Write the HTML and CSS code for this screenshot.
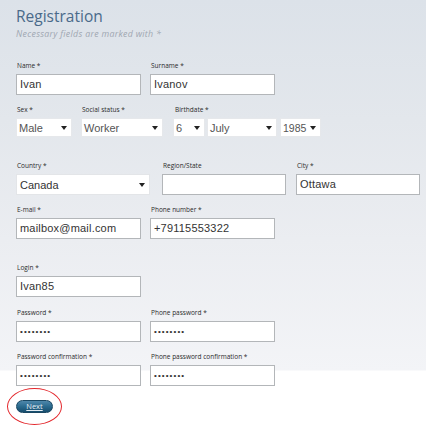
FILE: index.html
```html
<!DOCTYPE html>
<html>
<head>
<meta charset="utf-8">
<link rel="stylesheet" href="styles.css">
</head>
<body>
<div class="page">
  <div class="head">
    <h1 class="title">Registration</h1>
    <p class="subtitle">Necessary fields are marked with *</p>
  </div>

  <div class="row r1">
    <div class="field"><span class="label">Name *</span><div class="input w125">Ivan</div></div>
    <div class="field"><span class="label">Surname *</span><div class="input w125">Ivanov</div></div>
  </div>

  <div class="row r2">
    <div class="field"><span class="label">Sex *</span><div class="select w56"><span>Male</span><i class="arrow"></i></div></div>
    <div class="field"><span class="label">Social status *</span><div class="select w82"><span>Worker</span><i class="arrow"></i></div></div>
    <div class="field">
      <span class="label indent">Birthdate *</span>
      <div class="date">
        <div class="select w32"><span>6</span><i class="arrow"></i></div>
        <div class="select w70"><span>July</span><i class="arrow"></i></div>
        <div class="select w41"><span>1985</span><i class="arrow"></i></div>
      </div>
    </div>
  </div>

  <div class="row r3">
    <div class="field"><span class="label">Country *</span><div class="select wide w134"><span>Canada</span><i class="arrow"></i></div></div>
    <div class="field"><span class="label">Region/State</span><div class="input w124"></div></div>
    <div class="field"><span class="label">City *</span><div class="input w124">Ottawa</div></div>
  </div>

  <div class="row r4">
    <div class="field"><span class="label">E-mail *</span><div class="input w125">mailbox@mail.com</div></div>
    <div class="field"><span class="label">Phone number *</span><div class="input w125">+79115553322</div></div>
  </div>

  <div class="row r5">
    <div class="field"><span class="label">Login *</span><div class="input w125">Ivan85</div></div>
  </div>

  <div class="row r6">
    <div class="field"><span class="label">Password *</span><div class="input pw w125">••••••••</div></div>
    <div class="field"><span class="label">Phone password *</span><div class="input pw w125">••••••••</div></div>
  </div>

  <div class="row r7">
    <div class="field"><span class="label">Password confirmation *</span><div class="input pw w125">••••••••</div></div>
    <div class="field"><span class="label">Phone password confirmation *</span><div class="input pw w125">••••••••</div></div>
  </div>

  <div class="actions">
    <div class="mark"><button class="next">Next</button></div>
  </div>
</div>
</body>
</html>
```

FILE: styles.css
```css
html { background: #ffffff; }
body {
  margin: 0;
  min-height: 429px;
  background: linear-gradient(to bottom, #dce2e9 0px, #e3e7ec 120px, #ebedf1 240px, #f3f4f7 370px, #ffffff 371px, #ffffff 100%);
  font-family: "Liberation Sans", Arial, sans-serif;
  color: #222;
}
.page {
  padding: 6px 0 0 16px;
}
.head { height: 56px; }
.title {
  margin: 0;
  font-family: "Open Sans", sans-serif;
  font-weight: 400;
  font-size: 15.5px;
  line-height: 20px;
  color: #4a6a8a;
}
.subtitle {
  margin: 2px 0 0 0;
  font-family: "Open Sans", sans-serif;
  font-style: italic;
  font-size: 8.8px;
  line-height: 12px;
  letter-spacing: 0.3px;
  color: #9ea7b1;
}
.row { display: flex; }
.r1 { gap: 9px; }
.r2 { gap: 9px; margin-top: 11px; }
.r2 .field + .field + .field { margin-left: 1px; }
.r3 { gap: 12px; margin-top: 25px; }
.r3 .field:last-child { margin-left: -2px; }
.r4 { gap: 9px; margin-top: 11px; }
.r5 { margin-top: 25px; }
.r6 { gap: 9px; margin-top: 12px; }
.r7 { gap: 9px; margin-top: 11px; }
.field { display: flex; flex-direction: column; }
.label {
  display: block;
  font-family: "Open Sans", sans-serif;
  font-size: 6.5px;
  line-height: 8px;
  height: 8px;
  margin: 0 0 4px 1px;
  color: #2a2a2a;
  white-space: nowrap;
}
.label.indent { margin-left: 2px; }
.input {
  box-sizing: border-box;
  height: 21px;
  background: #fff;
  border: 1px solid #b3b6b9;
  padding: 0 3px;
  font-size: 11px;
  line-height: 19px;
  letter-spacing: 0.2px;
  color: #333;
  white-space: nowrap;
  overflow: hidden;
}
.input.pw {
  font-size: 8px;
  letter-spacing: 1.1px;
  color: #333;
}
.w124 { width: 124px; }
.w125 { width: 125px; }
.w134 { width: 134px; }
.w56 { width: 56px; }
.w82 { width: 82px; }
.w32 { width: 32px; }
.w70 { width: 70px; }
.w41 { width: 41px; }
.select {
  box-sizing: border-box;
  height: 19px;
  background: #fff;
  border: 1px solid #e6e8eb;
  display: flex;
  align-items: center;
  justify-content: space-between;
  padding: 0 4px 0 2px;
  font-size: 11px;
  color: #555;
  white-space: nowrap;
}
.select.w41 { font-size: 10.5px; }
.select.wide { height: 21px; border-color: #e3e5e8; color: #333; padding-left: 3px; }
.arrow {
  flex: none;
  width: 0;
  height: 0;
  margin-left: 3px;
  border-left: 3px solid transparent;
  border-right: 3px solid transparent;
  border-top: 4px solid #222;
}
.date { display: flex; gap: 2px; }
.date .select + .select + .select { margin-left: 1px; }
.actions { margin-top: 2px; }
.mark {
  display: inline-flex;
  margin-left: -9px;
  padding: 11px 8px 11px 8px;
  border: 1px solid #e3262b;
  border-radius: 50%;
}
.next {
  width: 37px;
  height: 13px;
  padding: 0;
  border: 1px solid #1a4762;
  border-radius: 7px;
  background: linear-gradient(to bottom, #4f88ab 0%, #2a6a8e 50%, #174d6d 100%);
  color: #e6eef4;
  font-family: "Open Sans", sans-serif;
  font-size: 7.5px;
  line-height: 11px;
  text-decoration: underline;
  text-underline-offset: 1px;
}
```
